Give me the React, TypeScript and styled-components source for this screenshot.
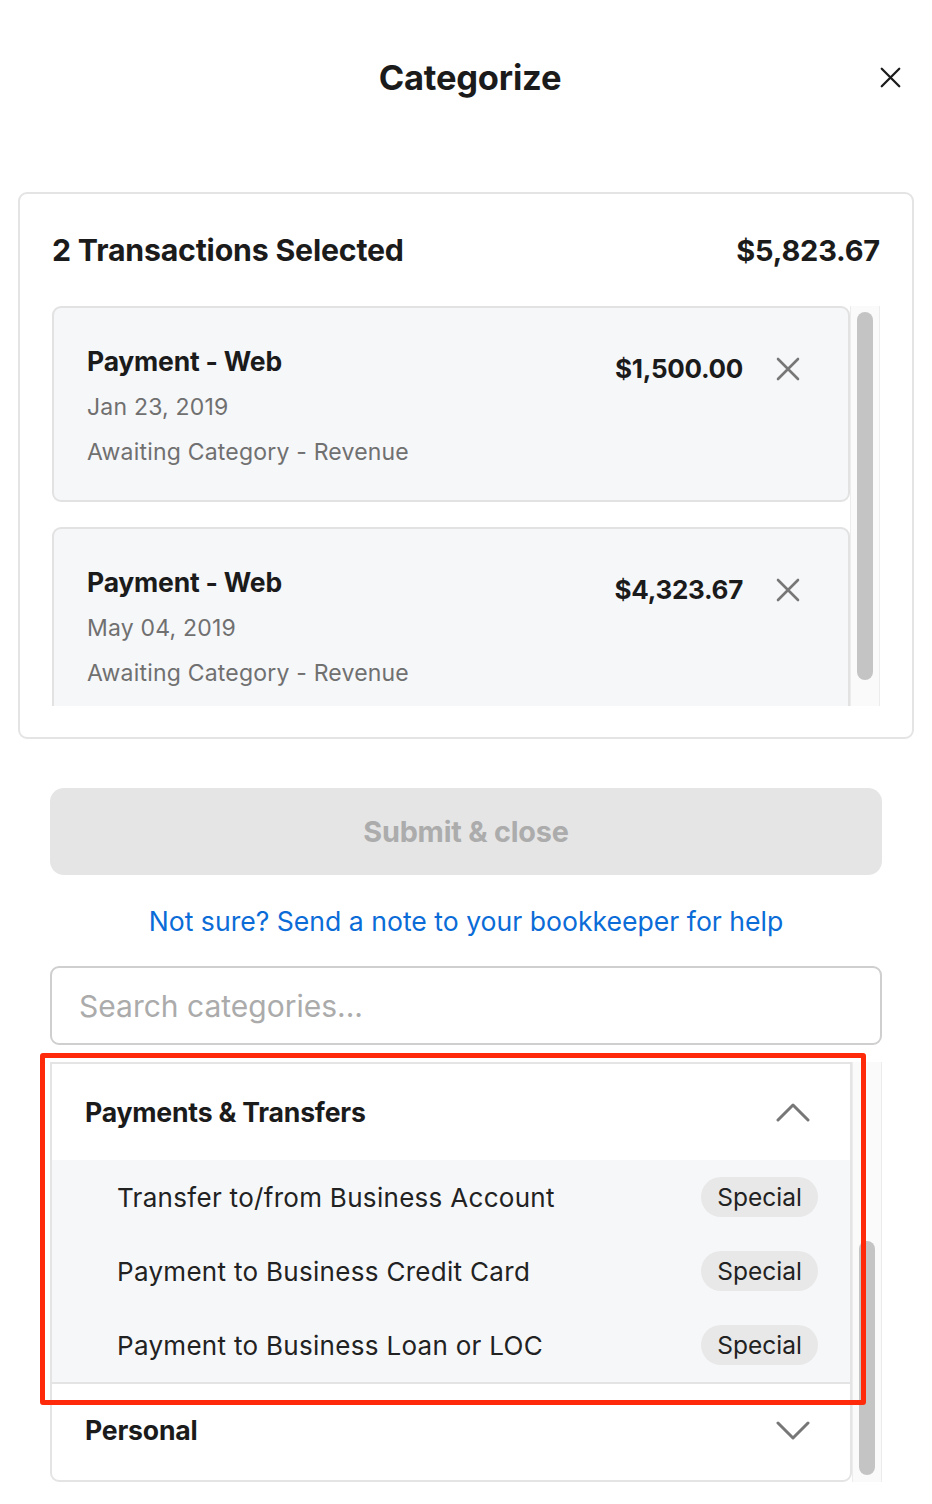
import styled, { createGlobalStyle } from "styled-components";

const GlobalStyle = createGlobalStyle`
  * {
    box-sizing: border-box;
  }
  body {
    margin: 0;
    background: #ffffff;
    font-family: "Inter", "Liberation Sans", sans-serif;
    color: #1b1b1b;
  }
`;

const Page = styled.div`
  width: 932px;
  padding-bottom: 22px;
`;

const Header = styled.div`
  display: grid;
  grid-template-columns: 1fr auto 1fr;
  align-items: center;
  height: 154px;
  padding: 0 31px 0 39px;
`;

const Title = styled.h1`
  grid-column: 2;
  margin: 0;
  font-size: 34.5px;
  font-weight: 700;
  letter-spacing: -0.2px;
`;

const CloseButton = styled.button`
  justify-self: end;
  border: none;
  background: none;
  padding: 0;
  width: 21px;
  height: 21px;
  display: flex;
  cursor: pointer;
`;

const Card = styled.section`
  margin: 38px 18px 0;
  border: 2px solid #e4e4e4;
  border-radius: 9px;
  padding: 0 32px 31px;
`;

const CardHeader = styled.div`
  height: 112px;
  display: flex;
  align-items: center;
  justify-content: space-between;
`;

const CardTitle = styled.h2`
  margin: 0;
  font-size: 30.3px;
  font-weight: 700;
  letter-spacing: -0.2px;
`;

const Total = styled.span`
  font-size: 29px;
  font-weight: 700;
  letter-spacing: -0.2px;
`;

const ScrollRow = styled.div<{ height: number }>`
  display: flex;
  height: ${(props) => props.height}px;
  overflow: hidden;
`;

const ListColumn = styled.div`
  flex: 1;
  display: flex;
  flex-direction: column;
  gap: 25px;
  min-width: 0;
`;

const Track = styled.div<{ thumbTop: number; thumbHeight: number }>`
  width: 30px;
  flex-shrink: 0;
  background: #fafafa;
  border-left: 1px solid #ececec;
  border-right: 1px solid #ececec;
  display: flex;
  justify-content: center;
  padding-top: ${(props) => props.thumbTop}px;

  &::before {
    content: "";
    width: 16px;
    height: ${(props) => props.thumbHeight}px;
    border-radius: 8px;
    background: #c4c4c4;
  }
`;

const TxItem = styled.div`
  flex-shrink: 0;
  display: flex;
  justify-content: space-between;
  align-items: flex-start;
  border: 2px solid #e2e2e2;
  border-radius: 9px;
  background: #f6f7f9;
  padding: 37px 48px 33px 33px;
`;

const TxInfo = styled.div`
  display: flex;
  flex-direction: column;
`;

const TxName = styled.div`
  font-size: 26.5px;
  font-weight: 700;
  line-height: 32px;
  letter-spacing: -0.2px;
`;

const TxMeta = styled.div`
  font-size: 23px;
  line-height: 30px;
  letter-spacing: 0.2px;
  color: #707070;
  margin-top: 15px;
`;

const TxRight = styled.div`
  display: flex;
  align-items: center;
  gap: 33px;
  margin-top: 8px;
`;

const TxAmount = styled.span`
  font-size: 26px;
  font-weight: 700;
  letter-spacing: -0.3px;
`;

const RemoveButton = styled.button`
  border: none;
  background: none;
  padding: 0;
  display: flex;
  cursor: pointer;
`;

const Actions = styled.div`
  padding: 49px 50px 0;
  display: flex;
  flex-direction: column;
`;

const SubmitButton = styled.button`
  height: 87px;
  border: none;
  border-radius: 14px;
  background: #e5e5e5;
  color: #acacac;
  font-family: inherit;
  font-size: 28.8px;
  font-weight: 700;
  letter-spacing: -0.2px;
`;

const HelpLink = styled.a`
  margin-top: 30px;
  text-align: center;
  font-size: 26.6px;
  line-height: 32px;
  color: #0b6cd7;
  text-decoration: none;
`;

const SearchInput = styled.input`
  margin-top: 29px;
  height: 79px;
  border: 2px solid #cfcfcf;
  border-radius: 9px;
  padding: 0 27px;
  font-family: inherit;
  font-size: 30px;
  color: #1b1b1b;
  outline: none;

  &::placeholder {
    color: #ababab;
  }
`;

const CategoryArea = styled.div`
  position: relative;
  margin: 17px 50px 0;
`;

const CategoryBox = styled.div`
  flex: 1;
  border: 2px solid #e4e4e4;
  border-radius: 0 0 9px 9px;
  background: #ffffff;
`;

const GroupHeader = styled.div<{ open?: boolean }>`
  height: ${(props) => (props.open ? 96 : 94)}px;
  display: flex;
  align-items: center;
  justify-content: space-between;
  padding: 0 40px 0 33px;
  border-top: ${(props) => (props.open ? "none" : "2px solid #e4e4e4")};
`;

const GroupTitle = styled.span`
  font-size: 26.6px;
  font-weight: 700;
  letter-spacing: -0.2px;
`;

const GroupBody = styled.div`
  background: #f6f7f9;
`;

const CategoryRow = styled.div`
  height: 74px;
  display: flex;
  align-items: center;
  justify-content: space-between;
  padding: 0 32px 0 65px;
  font-size: 26px;
  letter-spacing: 0.3px;
  color: #222222;
`;

const Pill = styled.span`
  height: 40px;
  display: flex;
  align-items: center;
  padding: 0 16px;
  border-radius: 20px;
  background: #e8e8e8;
  font-size: 24.5px;
  letter-spacing: 0;
  color: #222222;
`;

const Highlight = styled.div`
  position: absolute;
  left: -10px;
  top: -9px;
  width: 826px;
  height: 352px;
  border: 5px solid #ff2a0a;
  border-radius: 3px;
  pointer-events: none;
`;

const transactions = [
  { id: 1, name: "Payment - Web", date: "Jan 23, 2019", amount: "$1,500.00" },
  { id: 2, name: "Payment - Web", date: "May 04, 2019", amount: "$4,323.67" },
];

const categories = [
  "Transfer to/from Business Account",
  "Payment to Business Credit Card",
  "Payment to Business Loan or LOC",
];

function Cross({ size, color, width }: { size: number; color: string; width: number }) {
  return (
    <svg width={size} height={size} viewBox="0 0 24 24" fill="none">
      <path d="M2 2L22 22M22 2L2 22" stroke={color} strokeWidth={width} strokeLinecap="round" />
    </svg>
  );
}

function Chevron({ up }: { up?: boolean }) {
  return (
    <svg width="34" height="19" viewBox="0 0 34 19" fill="none">
      <path
        d={up ? "M2 17L17 2L32 17" : "M2 2L17 17L32 2"}
        stroke="#777777"
        strokeWidth="3"
        strokeLinecap="round"
        strokeLinejoin="round"
      />
    </svg>
  );
}

export default function App() {
  return (
    <Page>
      <GlobalStyle />
      <Header>
        <Title>Categorize</Title>
        <CloseButton aria-label="Close">
          <Cross size={21} color="#1b1b1b" width={2.6} />
        </CloseButton>
      </Header>

      <Card>
        <CardHeader>
          <CardTitle>2 Transactions Selected</CardTitle>
          <Total>$5,823.67</Total>
        </CardHeader>
        <ScrollRow height={400}>
          <ListColumn>
            {transactions.map((tx) => (
              <TxItem key={tx.id}>
                <TxInfo>
                  <TxName>{tx.name}</TxName>
                  <TxMeta>{tx.date}</TxMeta>
                  <TxMeta>Awaiting Category - Revenue</TxMeta>
                </TxInfo>
                <TxRight>
                  <TxAmount>{tx.amount}</TxAmount>
                  <RemoveButton aria-label="Remove">
                    <Cross size={24} color="#777777" width={2.6} />
                  </RemoveButton>
                </TxRight>
              </TxItem>
            ))}
          </ListColumn>
          <Track thumbTop={6} thumbHeight={368} />
        </ScrollRow>
      </Card>

      <Actions>
        <SubmitButton disabled>Submit &amp; close</SubmitButton>
        <HelpLink href="#">Not sure? Send a note to your bookkeeper for help</HelpLink>
        <SearchInput placeholder="Search categories..." />
      </Actions>

      <CategoryArea>
        <ScrollRow height={420}>
          <CategoryBox>
            <GroupHeader open>
              <GroupTitle>Payments &amp; Transfers</GroupTitle>
              <Chevron up />
            </GroupHeader>
            <GroupBody>
              {categories.map((name) => (
                <CategoryRow key={name}>
                  {name}
                  <Pill>Special</Pill>
                </CategoryRow>
              ))}
            </GroupBody>
            <GroupHeader>
              <GroupTitle>Personal</GroupTitle>
              <Chevron />
            </GroupHeader>
          </CategoryBox>
          <Track thumbTop={179} thumbHeight={234} />
        </ScrollRow>
        <Highlight />
      </CategoryArea>
    </Page>
  );
}
